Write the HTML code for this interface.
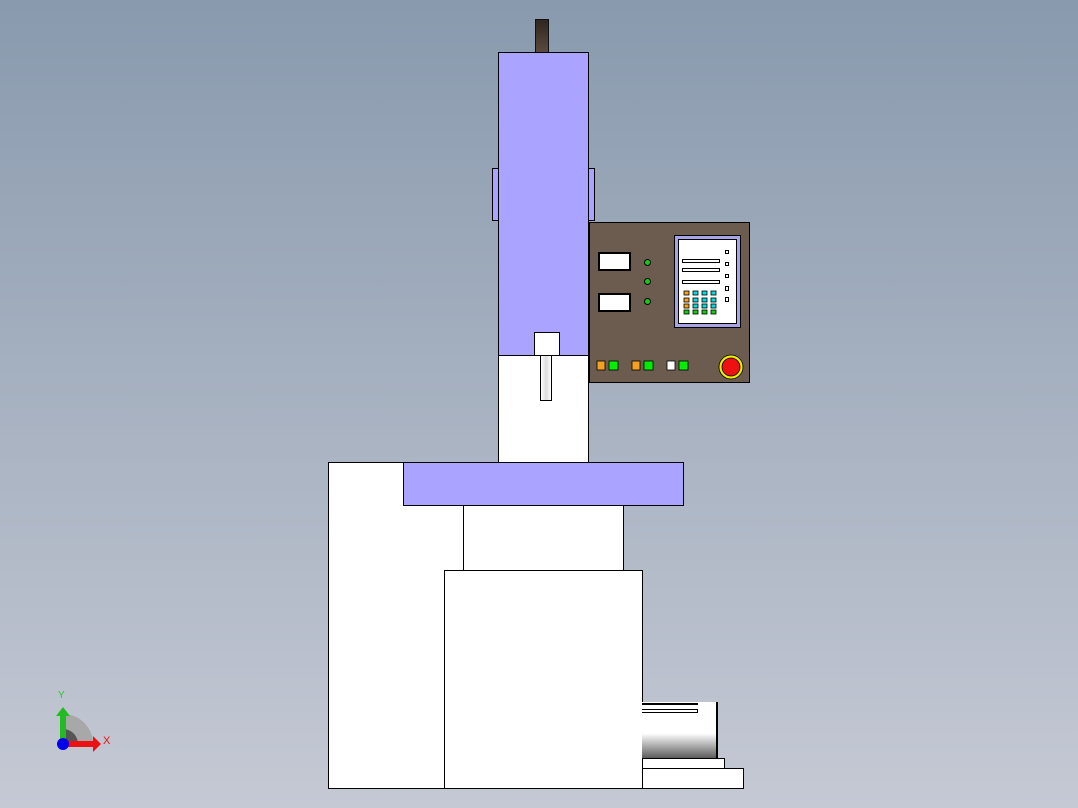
<!DOCTYPE html><html><head><style>
body{margin:0;width:1078px;height:808px;overflow:hidden;background:linear-gradient(#899aae,#c5c9d4);position:relative;font-family:"Liberation Sans",sans-serif}
div{position:absolute;box-sizing:border-box}
.w{background:#fff;border:1px solid #000}
.p{background:#aaa3ff;border:1px solid #000}
.b{border:1px solid #000}
</style></head><body>
<div style="left:535px;top:19px;width:14px;height:34px;background:linear-gradient(#2e2620,#5a4a3e);border:1px solid #111"></div>
<div class="p" style="left:492px;top:168px;width:8px;height:53px"></div>
<div class="p" style="left:586px;top:168px;width:9px;height:53px"></div>
<div class="p" style="left:498px;top:52px;width:91px;height:304px"></div>
<div class="w" style="left:498px;top:355px;width:91px;height:108px"></div>
<div class="w" style="left:534px;top:332px;width:26px;height:24px"></div>
<div style="left:540px;top:355px;width:12px;height:46px;background:linear-gradient(90deg,#fff,#ddd,#fff);border:1px solid #000"></div>
<div style="left:589px;top:222px;width:161px;height:161px;background:#6b5c4f;border:1px solid #000"></div>
<div class="w" style="left:598px;top:252px;width:33px;height:19px;border-width:2px"></div>
<div class="w" style="left:598px;top:293px;width:33px;height:19px;border-width:2px"></div>
<div style="left:644px;top:259px;width:7px;height:7px;border-radius:50%;background:#1c1;border:1px solid #000"></div>
<div style="left:644px;top:278px;width:7px;height:7px;border-radius:50%;background:#1c1;border:1px solid #000"></div>
<div style="left:644px;top:298px;width:7px;height:7px;border-radius:50%;background:#1c1;border:1px solid #000"></div>
<div style="left:674px;top:235px;width:67px;height:93px;background:#a9a3e8;border:1px solid #000"></div>
<div style="left:678px;top:239px;width:59px;height:85px;background:#fff;border:1px solid #000"></div>
<div class="b" style="left:682px;top:259px;width:38px;height:4px"></div>
<div class="b" style="left:682px;top:268px;width:38px;height:4px"></div>
<div class="b" style="left:682px;top:280px;width:38px;height:4px"></div>
<div class="b" style="left:725px;top:250px;width:4px;height:4px"></div>
<div class="b" style="left:725px;top:262px;width:4px;height:4px"></div>
<div class="b" style="left:725px;top:274px;width:4px;height:4px"></div>
<div class="b" style="left:725px;top:286px;width:4px;height:5px"></div>
<div class="b" style="left:725px;top:297px;width:4px;height:5px"></div>
<svg style="position:absolute;left:0;top:0" width="1078" height="808">
<g stroke="#000" stroke-width="0.8">
<rect x="684" y="291" width="5" height="4" fill="#f5a020"/><rect x="693" y="291" width="5" height="4" fill="#0dd"/><rect x="702" y="291" width="5" height="4" fill="#0dd"/><rect x="711" y="291" width="5" height="4" fill="#0dd"/>
<rect x="684" y="298" width="5" height="4" fill="#f5a020"/><rect x="693" y="298" width="5" height="4" fill="#0dd"/><rect x="702" y="298" width="5" height="4" fill="#0dd"/><rect x="711" y="298" width="5" height="4" fill="#0dd"/>
<rect x="684" y="304" width="5" height="4" fill="#f5a020"/><rect x="693" y="304" width="5" height="4" fill="#0dd"/><rect x="702" y="304" width="5" height="4" fill="#0dd"/><rect x="711" y="304" width="5" height="4" fill="#0dd"/>
<rect x="684" y="310" width="5" height="4" fill="#1c1"/><rect x="693" y="310" width="5" height="4" fill="#1c1"/><rect x="702" y="310" width="5" height="4" fill="#1c1"/><rect x="711" y="310" width="5" height="4" fill="#1c1"/>
<rect x="597" y="361" width="8" height="9" fill="#f5a020"/><rect x="609" y="361" width="9" height="9" fill="#0e0"/>
<rect x="632" y="361" width="8" height="9" fill="#f5a020"/><rect x="644" y="361" width="9" height="9" fill="#0e0"/>
<rect x="667" y="361" width="8" height="9" fill="#fff"/><rect x="679" y="361" width="9" height="9" fill="#0e0"/>
<circle cx="731" cy="367" r="12" fill="#ee0"/><circle cx="731" cy="367" r="9" fill="#e11"/>
</g>
<path d="M63 744 L63 714 A30 30 0 0 1 93 744Z" fill="#a8a8a8"/>
<path d="M63 744 L63 729 A15 15 0 0 1 78 744Z" fill="#555"/>
<rect x="65" y="741" width="29" height="6" fill="#e11"/><path d="M93 736 L101 744 L93 752Z" fill="#e11"/>
<rect x="60" y="715" width="6" height="28" fill="#2b2"/><path d="M56 716 L63 707 L70 716Z" fill="#2b2"/>
<circle cx="63" cy="744" r="6" fill="#00e"/>
<text x="58" y="698" font-size="10" fill="#2c2" font-family="Liberation Sans">Y</text>
<text x="103" y="744" font-size="11" fill="#e11" font-family="Liberation Sans">X</text>
</svg>
<div class="w" style="left:328px;top:462px;width:136px;height:327px"></div>
<div class="w" style="left:463px;top:504px;width:161px;height:67px"></div>
<div class="p" style="left:403px;top:462px;width:281px;height:44px"></div>
<div class="w" style="left:444px;top:570px;width:199px;height:219px"></div>
<div style="left:642px;top:702px;width:76px;height:57px;background:linear-gradient(#fff 0%,#fff 55%,#555 100%);border-right:2px solid #000"></div>
<div style="left:642px;top:703px;width:56px;height:2px;background:#000"></div>
<div style="left:642px;top:709px;width:56px;height:4px;border:1px solid #000;border-left:none"></div>
<div class="w" style="left:642px;top:758px;width:83px;height:11px"></div>
<div class="w" style="left:642px;top:768px;width:102px;height:21px"></div>
</body></html>
